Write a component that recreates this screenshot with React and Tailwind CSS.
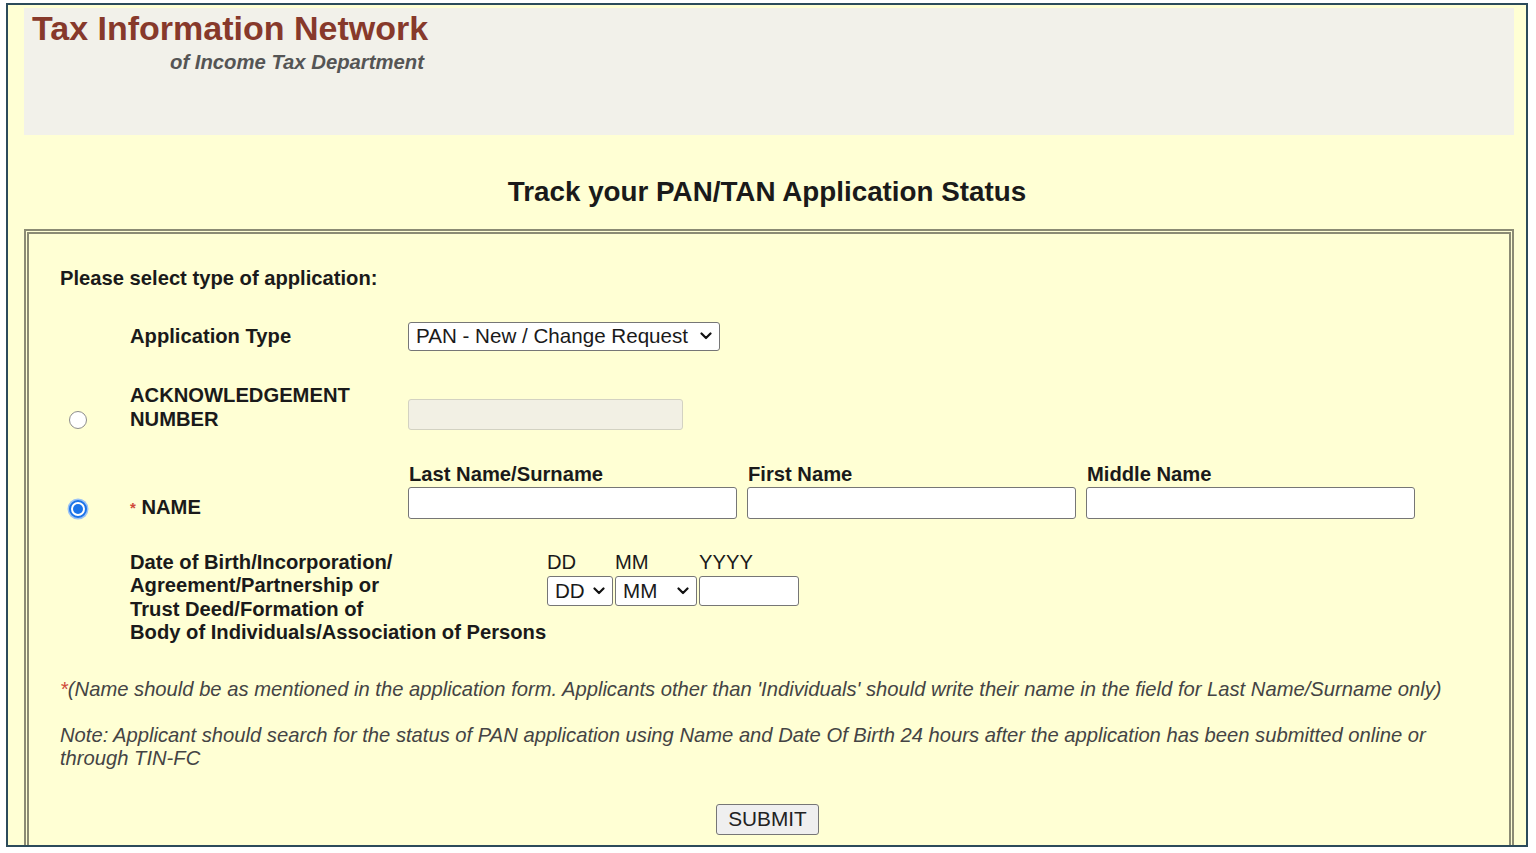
import React from 'react';

const Chevron = ({ className }) => (
  <svg
    viewBox="0 0 12 8"
    className={className}
    fill="none"
    stroke="#111"
    strokeWidth="2.2"
    strokeLinecap="round"
    strokeLinejoin="round"
  >
    <path d="M1.5 1.5 L6 6 L10.5 1.5" />
  </svg>
);

const Select = ({ value, width, height, chevronLeft }) => (
  <div className={`relative ${width} ${height}`}>
    <select
      defaultValue={value}
      className="appearance-none w-full h-full border border-[#767676] rounded-[3px] bg-white pl-[7px] text-[20.6px] leading-none text-[#1a1a1a]"
    >
      <option>{value}</option>
    </select>
    <Chevron className={`absolute top-1/2 -translate-y-1/2 w-[12px] h-[8px] pointer-events-none ${chevronLeft}`} />
  </div>
);

const Radio = ({ checked }) =>
  checked ? (
    <span className="block w-[18px] h-[18px] rounded-full border-2 border-[#1a73e8] bg-white p-[2px] shadow-[0_0_0_1.5px_#9cc3f5]">
      <span className="block w-full h-full rounded-full bg-[#1a73e8]" />
    </span>
  ) : (
    <span className="block w-[18px] h-[18px] rounded-full border border-[#8d8d8d] bg-white" />
  );

export default function App() {
  return (
    <div className="bg-white min-h-[853px] pt-[3px] pl-[6px] font-['Liberation_Sans',Arial,sans-serif]">
      <div className="w-[1522px] h-[844px] border-2 border-[#2c4b5b] bg-[#ffffd4] overflow-hidden">
        {/* header */}
        <div className="mt-[3px] ml-[16px] w-[1490px] h-[127px] bg-[#f2f1ea] pt-[3px] pl-[8px]">
          <div className="text-[34px] leading-none font-bold text-[#87392b]">Tax Information Network</div>
          <div className="mt-[7px] ml-[138px] text-[20.3px] leading-none font-bold italic text-[#555555]">
            of Income Tax Department
          </div>
        </div>

        <h1 className="mt-[43px] text-center text-[27.8px] leading-none font-bold text-[#1a1a1a]">
          Track your PAN/TAN Application Status
        </h1>

        {/* form box */}
        <div className="mt-[23px] ml-[16px] w-[1490px] h-[700px] border-[5px] border-double border-[#8b8b74] pt-[33px] pl-[31px] pr-[31px] text-[#1a1a1a]">
          <div className="text-[20.2px] leading-[23px] font-bold">Please select type of application:</div>

          {/* application type */}
          <div className="mt-[32px] flex items-center h-[29px]">
            <div className="w-[70px]" />
            <div className="w-[278px] text-[20.2px] font-bold">Application Type</div>
            <Select value="PAN - New / Change Request" width="w-[312px]" height="h-[29px]" chevronLeft="left-[292px]" />
          </div>

          {/* acknowledgement */}
          <div className="mt-[32px] flex items-end">
            <div className="w-[70px] pl-[9px] pb-[2px]">
              <Radio />
            </div>
            <div className="w-[278px] text-[20.2px] leading-[24px] font-bold">
              ACKNOWLEDGEMENT
              <br />
              NUMBER
            </div>
            <div className="w-[275px] h-[31px] mb-[1px] border border-[#d3d2c2] rounded-[3px] bg-[#f2f0e4]" />
          </div>

          {/* name */}
          <div className="mt-[32px] flex items-end">
            <div className="w-[70px] pl-[9px] pb-[1px]">
              <Radio checked />
            </div>
            <div className="w-[278px] text-[20.2px] leading-[23px] font-bold">
              <span className="text-[#d04a3a] text-[15px] align-top">*</span> NAME
            </div>
            <div className="flex gap-[10px]">
              {['Last Name/Surname', 'First Name', 'Middle Name'].map((label) => (
                <div key={label} className="w-[329px]">
                  <div className="text-[20.2px] leading-[23px] font-bold pl-[1px]">{label}</div>
                  <input className="mt-[1px] block w-full h-[32px] border border-[#767676] rounded-[3px] bg-white" />
                </div>
              ))}
            </div>
          </div>

          {/* date of birth */}
          <div className="mt-[32px] flex items-start">
            <div className="w-[70px]" />
            <div className="w-[417px] text-[20.2px] leading-[23.5px] font-bold">
              Date of Birth/Incorporation/
              <br />
              Agreement/Partnership or
              <br />
              Trust Deed/Formation of
              <br />
              Body of Individuals/Association of Persons
            </div>
            <div className="flex gap-[2px]">
              <div className="w-[66px]">
                <div className="text-[20.2px] leading-[23.5px]">DD</div>
                <div className="mt-[1.5px]">
                  <Select value="DD" width="w-[66px]" height="h-[30px]" chevronLeft="left-[46px]" />
                </div>
              </div>
              <div className="w-[82px]">
                <div className="text-[20.2px] leading-[23.5px]">MM</div>
                <div className="mt-[1.5px]">
                  <Select value="MM" width="w-[82px]" height="h-[30px]" chevronLeft="left-[62px]" />
                </div>
              </div>
              <div className="w-[100px]">
                <div className="text-[20.2px] leading-[23.5px]">YYYY</div>
                <input className="mt-[1.5px] block w-[100px] h-[30px] border border-[#767676] rounded-[3px] bg-white" />
              </div>
            </div>
          </div>

          {/* notes */}
          <p className="mt-[33px] text-[20.2px] leading-[23px] italic text-[#444444]">
            <span className="text-[#d04a3a]">*</span>(Name should be as mentioned in the application form. Applicants other than 'Individuals' should write their name in the field for Last Name/Surname only)
          </p>
          <p className="mt-[23px] text-[20.2px] leading-[23px] italic text-[#444444]">
            Note: Applicant should search for the status of PAN application using Name and Date Of Birth 24 hours after the application has been submitted online or through TIN-FC
          </p>

          <div className="mt-[34px] pl-[656px]">
            <button className="w-[103px] h-[31px] border border-[#767676] rounded-[3px] bg-[#efefef] text-[20.8px] leading-none text-[#222222]">
              SUBMIT
            </button>
          </div>
        </div>
      </div>
    </div>
  );
}
